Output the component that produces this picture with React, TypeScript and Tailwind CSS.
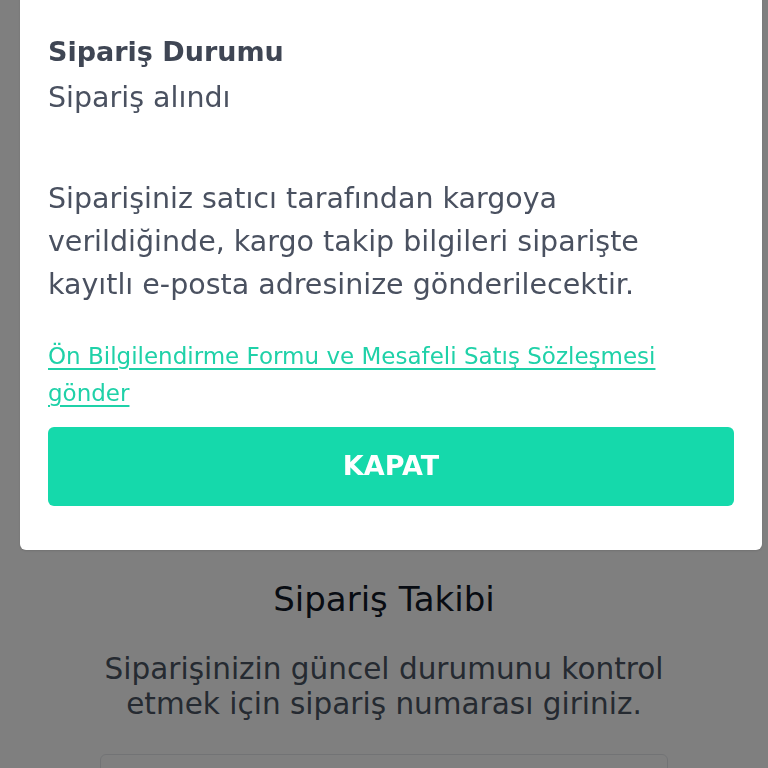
import { useState } from "react";

const FONT = { fontFamily: "'DejaVu Sans', 'Noto Sans', sans-serif" };

function TrackingPage() {
  const [orderNo, setOrderNo] = useState("");
  return (
    <div className="min-h-[768px] bg-white flex flex-col items-center pt-[579px]">
      <h2 className="text-[34px] leading-[40px] font-normal text-[#111827] m-0">Sipariş Takibi</h2>
      <p className="mt-[33px] text-[29.5px] leading-[35px] text-[#4b5563] text-center">
        Siparişinizin güncel durumunu kontrol
        <br />
        etmek için sipariş numarası giriniz.
      </p>
      <input
        value={orderNo}
        onChange={(e) => setOrderNo(e.target.value)}
        className="mt-[32px] w-[568px] h-[56px] border border-[#e5e7eb] rounded-md bg-white px-4 text-[20px]"
      />
    </div>
  );
}

function StatusModal({ onClose }: { onClose: () => void }) {
  return (
    <>
      <div className="fixed inset-0 bg-black/50" />
      <div className="fixed left-[20px] top-[-10px] w-[742px] bg-white rounded-md shadow-sm px-[28px] pt-[39px] pb-[44px]">
        <div className="text-[27px] leading-[46px] font-bold text-[#3f4654]">Sipariş Durumu</div>
        <div className="text-[28.5px] leading-[46px] text-[#4a5160]">Sipariş alındı</div>
        <p className="mt-[56px] text-[28.5px] leading-[43px] text-[#4a5160]">
          Siparişiniz satıcı tarafından kargoya
          <br />
          verildiğinde, kargo takip bilgileri siparişte
          <br />
          kayıtlı e-posta adresinize gönderilecektir.
        </p>
        <a
          href="#"
          className="block mt-[32px] text-[23px] leading-[37px] text-[#1fd1a8] underline underline-offset-[4px]"
        >
          Ön Bilgilendirme Formu ve Mesafeli Satış Sözleşmesi
          <br />
          gönder
        </a>
        <button
          onClick={onClose}
          className="mt-[15px] w-[686px] h-[79px] rounded-md bg-[#15d9ab] text-white text-[27px] font-bold"
        >
          KAPAT
        </button>
      </div>
    </>
  );
}

export default function App() {
  const [open, setOpen] = useState(true);
  return (
    <div style={FONT} className="relative w-full h-[768px] overflow-hidden">
      <TrackingPage />
      {open && <StatusModal onClose={() => setOpen(false)} />}
    </div>
  );
}
